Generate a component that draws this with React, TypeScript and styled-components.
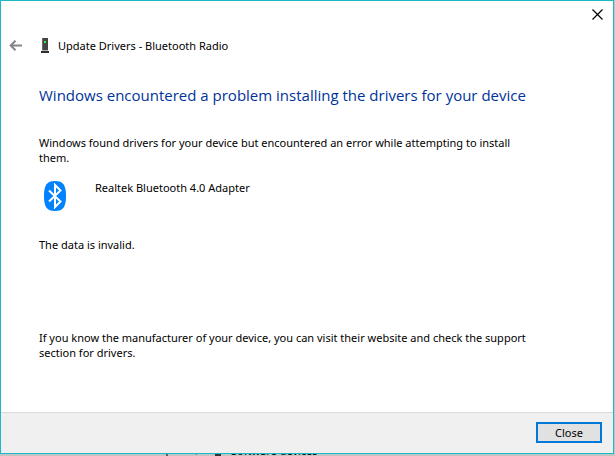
import React from "react";
import styled, { createGlobalStyle } from "styled-components";

const GlobalStyle = createGlobalStyle`
  * { box-sizing: border-box; }
  html, body, #root { height: 100%; margin: 0; }
  body {
    font-family: "Noto Sans", "Open Sans", sans-serif;
    font-size: 11px;
    line-height: 15px;
    color: #000;
    background: #c3c5c4;
  }
  p, h1, h2 { margin: 0; font-weight: 400; }
`;

const Desktop = styled.div`
  position: relative;
  display: flex;
  min-height: 100%;
  padding: 0 1px 2px 0;
  overflow: hidden;
`;

const TreeItem = styled.div`
  position: absolute;
  left: 166px;
  bottom: -2px;
  display: flex;
  align-items: center;
  gap: 10px;
`;

const Dialog = styled.main`
  position: relative;
  flex: 1;
  display: flex;
  flex-direction: column;
  border: 1px solid #1cb8c3;
  background: #fff;
`;

const TitleBar = styled.div`
  display: flex;
  justify-content: flex-end;
  height: 28px;
`;

const IconButton = styled.button`
  display: flex;
  align-items: center;
  justify-content: center;
  width: 30px;
  height: 28px;
  padding: 0;
  border: 0;
  background: transparent;
`;

const Header = styled.header`
  display: flex;
  align-items: center;
  gap: 9px;
  height: 33px;
`;

const Title = styled.h1`
  font-size: 11px;
  line-height: 15px;
`;

const Content = styled.section`
  flex: 1;
  display: flex;
  flex-direction: column;
  padding: 22px 80px 0 38px;
`;

const Heading = styled.h2`
  font-family: "Open Sans", "Noto Sans", sans-serif;
  font-size: 15px;
  line-height: 22px;
  color: #003399;
`;

const Message = styled.p<{ $gap: number }>`
  margin-top: ${({ $gap }) => $gap}px;
`;

const Device = styled.div`
  display: flex;
  gap: 28px;
  margin: 15px 0 0 4px;
`;

const Footer = styled.footer`
  display: flex;
  align-items: center;
  justify-content: flex-end;
  height: 41px;
  padding: 0 11px 1px;
  border-top: 1px solid #dadada;
  background: #f0f0f0;
`;

const PushButton = styled.button`
  width: 66px;
  height: 21px;
  padding: 0;
  border: 2px solid #0078d7;
  background: #e1e1e1;
  color: #000;
  font: inherit;
`;

const BackIcon = () => (
  <svg width="14" height="12" viewBox="1 0 14 12" fill="none" stroke="#858585" strokeWidth="2" aria-hidden="true">
    <path d="M14 5.500H3M7.500 .8L2.700 5.500l4.800 4.700" />
  </svg>
);

const CloseIcon = () => (
  <svg width="12" height="12" viewBox="0 0 12 12" stroke="#000" strokeWidth="1.2" aria-hidden="true">
    <path d="M.5.5l10 10M10.5.5l-10 10" />
  </svg>
);

const DeviceIcon = () => (
  <svg width="9" height="15" viewBox="0 0 9 15" shapeRendering="crispEdges" aria-hidden="true">
    <path d="M2 0h6v12H2z" fill="#454545" />
    <path d="M2 0h1v12H2z" fill="#6c6c6c" />
    <path d="M2 12h6v1H2z" fill="#b5b5b5" />
    <path d="M1 13h8v2H1z" fill="#2b2f35" />
    <path d="M4 3h2v2H4z" fill="#2dfa3c" />
  </svg>
);

const BluetoothIcon = () => (
  <svg width="24" height="31" viewBox="0 -1 24 31" fill="none" aria-hidden="true">
    <path d="M12 0C20.500 0 23 4.500 23 15s-2.500 15-11 15S1 25.500 1 15 3.500 0 12 0z" fill="#0082fe" />
    <path d="M6 9.500l11.500 11L12 26V4l5.500 5.500L6 20.500" stroke="#fff" strokeWidth="2" />
  </svg>
);

const ChipIcon = () => (
  <svg width="55" height="11" viewBox="0 0 55 11" aria-hidden="true">
    <path d="M0 1h2v10H0z" fill="#5e6261" />
    <path d="M34 5l-4 5" stroke="#777" fill="none" />
    <path d="M49 2h6v9h-6z" fill="#303434" />
  </svg>
);

export default function App() {
  return (
    <>
      <GlobalStyle />
      <Desktop>
        <TreeItem><ChipIcon />Software devices</TreeItem>
        <Dialog>
          <TitleBar>
            <IconButton aria-label="Close window"><CloseIcon /></IconButton>
          </TitleBar>
          <Header>
            <IconButton aria-label="Back"><BackIcon /></IconButton>
            <DeviceIcon />
            <Title>Update Drivers - Bluetooth Radio</Title>
          </Header>
          <Content>
            <Heading>Windows encountered a problem installing the drivers for your device</Heading>
            <Message $gap={29}>Windows found drivers for your device but encountered an error while attempting to install them.</Message>
            <Device><BluetoothIcon /><p>Realtek Bluetooth 4.0 Adapter</p></Device>
            <Message $gap={26}>The data is invalid.</Message>
            <Message $gap={78}>If you know the manufacturer of your device, you can visit their website and check the support section for drivers.</Message>
          </Content>
          <Footer><PushButton>Close</PushButton></Footer>
        </Dialog>
      </Desktop>
    </>
  );
}
